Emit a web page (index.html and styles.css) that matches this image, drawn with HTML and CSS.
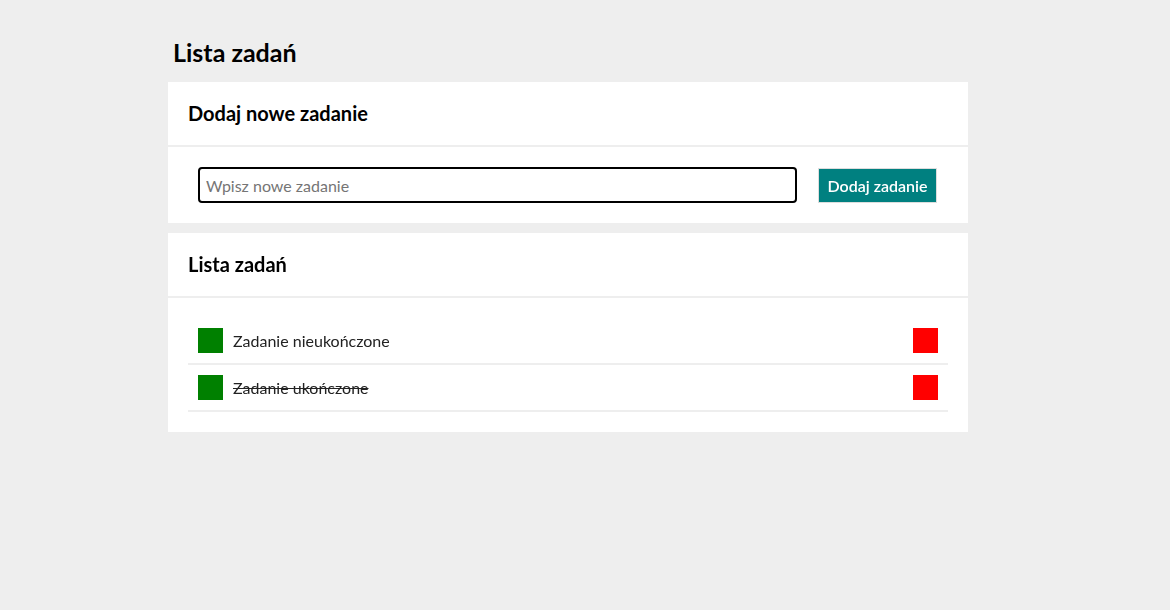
FILE: index.html
```html
<!DOCTYPE html>
<html lang="pl">
<head>
<meta charset="utf-8">
<title>Lista zadań</title>
<link rel="stylesheet" href="styles.css">
</head>
<body>
<div class="app">
  <h1 class="page-title">Lista zadań</h1>
  <section class="card">
    <header class="card-header">Dodaj nowe zadanie</header>
    <div class="card-body">
      <form class="add-form">
        <input class="task-input" type="text" placeholder="Wpisz nowe zadanie" autofocus>
        <button class="add-btn" type="button">Dodaj zadanie</button>
      </form>
    </div>
  </section>
  <section class="card">
    <header class="card-header">Lista zadań</header>
    <div class="card-body">
      <ul class="task-list">
        <li class="task">
          <span class="check"></span>
          <span class="task-text">Zadanie nieukończone</span>
          <span class="delete"></span>
        </li>
        <li class="task done">
          <span class="check"></span>
          <span class="task-text">Zadanie ukończone</span>
          <span class="delete"></span>
        </li>
      </ul>
    </div>
  </section>
</div>
</body>
</html>
```

FILE: styles.css
```css
* { box-sizing: border-box; }
html, body { margin: 0; padding: 0; }
body {
  background: #eeeeee;
  font-family: Lato, "Open Sans", sans-serif;
  color: #000;
}
.app {
  width: 800px;
  margin-left: 168px;
  padding-top: 38px;
}
.page-title {
  font-size: 25px;
  font-weight: 700;
  line-height: 29px;
  margin: 0 0 15px 5px;
}
.card {
  background: #fff;
  margin-bottom: 10px;
}
.card-header {
  font-size: 20px;
  font-weight: 700;
  line-height: 23px;
  padding: 20px;
  border-bottom: 2px solid #eeeeee;
}
.card-body {
  padding: 20px;
}
.add-form {
  display: flex;
  align-items: flex-start;
  gap: 21px;
  padding: 0 11px 0 10px;
  margin: 0;
}
.task-input {
  flex: 1;
  height: 36px;
  border: 2px solid #000;
  border-radius: 4px;
  padding: 0 6px;
  font-family: inherit;
  font-size: 16px;
  color: #333;
  outline: none;
}
.task-input::placeholder { color: #757575; }
.add-btn {
  margin-top: 1px;
  height: 35px;
  width: 119px;
  background: #008080;
  color: #fff;
  border: 1px solid #dddddd;
  font-family: inherit;
  font-size: 16px;
  font-weight: 600;
  line-height: 31px;
  padding: 0 0 1px;
}
.task-list {
  list-style: none;
  margin: 0;
  padding: 0;
}
.task {
  display: flex;
  align-items: center;
  gap: 10px;
  padding: 10px;
  border-bottom: 2px solid #eeeeee;
}
.check {
  width: 25px;
  height: 25px;
  background: #008000;
  flex: none;
}
.delete {
  width: 25px;
  height: 25px;
  background: #ff0000;
  flex: none;
}
.task-text {
  flex: 1;
  font-size: 16px;
  line-height: 20px;
  color: #222;
}
.done .task-text { text-decoration: line-through; }
```
